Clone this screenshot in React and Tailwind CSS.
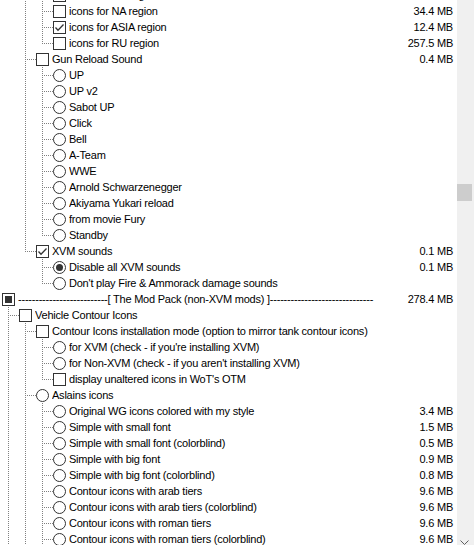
const ROWS = [
  { l: 3, t: "cb", label: "icons for EU region" },
  { l: 3, t: "cb", label: "icons for NA region", size: "34.4 MB" },
  { l: 3, t: "cb", on: true, label: "icons for ASIA region", size: "12.4 MB" },
  { l: 3, t: "cb", label: "icons for RU region", size: "257.5 MB" },
  { l: 2, t: "cb", label: "Gun Reload Sound", size: "0.4 MB" },
  { l: 3, t: "rb", label: "UP" },
  { l: 3, t: "rb", label: "UP v2" },
  { l: 3, t: "rb", label: "Sabot UP" },
  { l: 3, t: "rb", label: "Click" },
  { l: 3, t: "rb", label: "Bell" },
  { l: 3, t: "rb", label: "A-Team" },
  { l: 3, t: "rb", label: "WWE" },
  { l: 3, t: "rb", label: "Arnold Schwarzenegger" },
  { l: 3, t: "rb", label: "Akiyama Yukari reload" },
  { l: 3, t: "rb", label: "from movie Fury" },
  { l: 3, t: "rb", label: "Standby" },
  { l: 2, t: "cb", on: true, label: "XVM sounds", size: "0.1 MB" },
  { l: 3, t: "rb", on: true, label: "Disable all XVM sounds", size: "0.1 MB" },
  { l: 3, t: "rb", label: "Don't play Fire & Ammorack damage sounds" },
  {
    l: 0,
    t: "ind",
    label: "-".repeat(26) + "[ The Mod Pack (non-XVM mods) ]" + "-".repeat(30),
    size: "278.4 MB",
  },
  { l: 1, t: "cb", label: "Vehicle Contour Icons" },
  { l: 2, t: "cb", label: "Contour Icons installation mode (option to mirror tank contour icons)" },
  { l: 3, t: "rb", label: "for XVM (check - if you're installing XVM)" },
  { l: 3, t: "rb", label: "for Non-XVM (check - if you aren't installing XVM)" },
  { l: 3, t: "cb", label: "display unaltered icons in WoT's OTM" },
  { l: 2, t: "rb", label: "Aslains icons" },
  { l: 3, t: "rb", label: "Original WG icons colored with my style", size: "3.4 MB" },
  { l: 3, t: "rb", label: "Simple with small font", size: "1.5 MB" },
  { l: 3, t: "rb", label: "Simple with small font (colorblind)", size: "0.5 MB" },
  { l: 3, t: "rb", label: "Simple with big font", size: "0.9 MB" },
  { l: 3, t: "rb", label: "Simple with big font (colorblind)", size: "0.8 MB" },
  { l: 3, t: "rb", label: "Contour icons with arab tiers", size: "9.6 MB" },
  { l: 3, t: "rb", label: "Contour icons with arab tiers (colorblind)", size: "9.6 MB" },
  { l: 3, t: "rb", label: "Contour icons with roman tiers", size: "9.6 MB" },
  { l: 3, t: "rb", label: "Contour icons with roman tiers (colorblind)", size: "9.6 MB" },
  // below the fold
  { l: 3, t: "rb", label: "Contour icons without tiers", size: "9.6 MB" },
  { l: 2, t: "rb", label: "Other icons" },
  { l: 1, t: "cb", label: "Crosshairs" },
];

const LINE = "#808080";

// which ancestor columns keep going below row i
function continues(i) {
  const level = ROWS[i].l;
  const cols = [];
  for (let k = 0; k < level; k++) {
    let cont = false;
    for (let j = i + 1; j < ROWS.length; j++) {
      if (ROWS[j].l <= k) break;
      if (ROWS[j].l === k + 1) {
        cont = true;
        break;
      }
    }
    cols.push(cont);
  }
  return cols;
}

function Gutter({ level, cols }) {
  const w = 2 + 17 * level;
  return (
    <svg width={w} height={16} className="shrink-0" shapeRendering="crispEdges">
      {cols.map((cont, k) => {
        const x = 8 + 17 * k + 0.5;
        if (k < level - 1) {
          return cont ? (
            <line key={k} x1={x} y1={0} x2={x} y2={16} stroke={LINE} strokeDasharray="1 1" />
          ) : null;
        }
        return (
          <g key={k}>
            <line x1={x} y1={0} x2={x} y2={cont ? 16 : 9} stroke={LINE} strokeDasharray="1 1" />
            <line x1={x + 1.5} y1={8.5} x2={w} y2={8.5} stroke={LINE} strokeDasharray="1 1" />
          </g>
        );
      })}
    </svg>
  );
}

function Mark({ t, on }) {
  if (t === "rb") {
    return (
      <span className="w-[13px] h-[13px] rounded-full border border-[#333333] bg-white flex items-center justify-center">
        {on && <span className="w-[7px] h-[7px] rounded-full bg-[#333333]" />}
      </span>
    );
  }
  if (t === "ind") {
    return (
      <span className="w-[13px] h-[13px] border border-[#333333] bg-white flex items-center justify-center">
        <span className="w-[7px] h-[7px] bg-[#333333]" />
      </span>
    );
  }
  return (
    <span className="w-[13px] h-[13px] border border-[#333333] bg-white flex items-center justify-center">
      {on && (
        <svg width="11" height="11" viewBox="0 0 11 11">
          <polyline points="1.5,5.5 4,8.2 9.5,2.5" fill="none" stroke="#333333" strokeWidth="1.3" />
        </svg>
      )}
    </span>
  );
}

function Row({ row, i }) {
  const cols = continues(i);
  return (
    <div className="flex h-4 leading-4 whitespace-nowrap">
      <Gutter level={row.l} cols={cols} />
      <div className="w-[13px] shrink-0 pt-[2px]">
        <Mark t={row.t} on={row.on} />
      </div>
      <div className="ml-[3px] flex-1 min-w-0 overflow-hidden">{row.label}</div>
      <div className="pr-[4px] shrink-0">{row.size}</div>
    </div>
  );
}

export default function App() {
  return (
    <div className="flex h-[545px] w-[474px] overflow-hidden bg-white text-[11px] tracking-[-0.22px] text-black font-['Liberation_Sans',Arial,sans-serif]">
      <div className="flex-1 min-w-0 overflow-hidden">
        <div className="-mt-[13px]">
          {ROWS.map((row, i) => (
            <Row key={i} row={row} i={i} />
          ))}
        </div>
      </div>
      <div className="w-[17px] shrink-0 bg-[#f0f0f0] flex flex-col">
        <div className="h-[184px]" />
        <div className="w-[15px] h-[17px] bg-[#cdcdcd]" />
        <div className="flex-1" />
        <div className="h-[5px] overflow-hidden pl-[3px]">
          <svg width="9" height="6" viewBox="0 0 9 6">
            <polyline points="0.5,0.5 4.5,4.5 8.5,0.5" fill="none" stroke="#606060" strokeWidth="1" />
          </svg>
        </div>
      </div>
    </div>
  );
}
